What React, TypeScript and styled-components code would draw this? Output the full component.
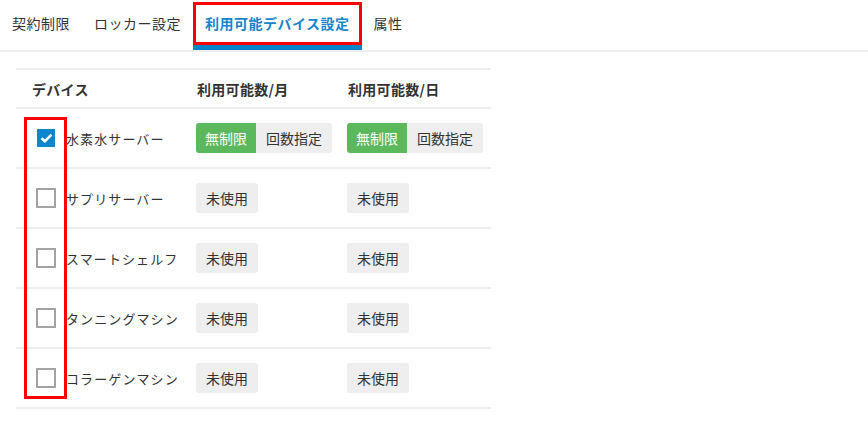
import React from "react";
import styled, { createGlobalStyle } from "styled-components";

const GlobalStyle = createGlobalStyle`
  * { box-sizing: border-box; }
  body {
    margin: 0;
    background: #ffffff;
    font-family: "Noto Sans CJK JP", "Noto Sans", sans-serif;
    color: #333;
  }
`;

const TabBar = styled.ul`
  display: flex;
  margin: 0;
  padding: 0;
  list-style: none;
  height: 52px;
  border-bottom: 2px solid #eeeeee;
`;

const Tab = styled.li<{ $active?: boolean }>`
  position: relative;
  display: flex;
  align-items: center;
  height: 50px;
  padding: 0 12px;
  font-size: 14px;
  letter-spacing: 0.5px;
  color: ${(p) => (p.$active ? "#1685c9" : "#333")};
  font-weight: ${(p) => (p.$active ? 700 : 400)};
  border-bottom: 5px solid ${(p) => (p.$active ? "#0a83c8" : "transparent")};
`;

const Highlight = styled.span`
  position: absolute;
  pointer-events: none;
  border: 3px solid #ff0000;
`;

const TabHighlight = styled(Highlight)`
  left: 0;
  right: 0;
  top: 2px;
  bottom: 0;
`;

const TableWrap = styled.div`
  position: relative;
  width: 475px;
  margin: 16px 0 0 16px;
`;

const Table = styled.table`
  width: 100%;
  border-collapse: collapse;
  border-top: 2px solid #eeeeee;
`;

const HeadCell = styled.th`
  text-align: left;
  font-size: 14px;
  font-weight: 700;
  color: #333;
  height: 39px;
  padding: 0 0 0 16px;
  letter-spacing: 0.3px;
`;

const Row = styled.tr`
  border-top: 2px solid #eeeeee;
  border-bottom: 2px solid #eeeeee;
`;

const Cell = styled.td`
  height: 60px;
  padding: 0 0 0 15px;
  vertical-align: middle;
`;

const DeviceLabel = styled.label`
  display: flex;
  align-items: center;
  gap: 10px;
  padding-left: 5px;
  font-size: 13px;
  letter-spacing: 1.1px;
  color: #333;
  white-space: nowrap;
`;

const Check = styled.span<{ $checked?: boolean }>`
  display: inline-flex;
  align-items: center;
  justify-content: center;
  width: 20px;
  height: 20px;
  flex: none;
  border: ${(p) => (p.$checked ? "1px solid #fff" : "2px solid #a3a3a3")};
  background: ${(p) => (p.$checked ? "#0a86cf" : "#fff")};
`;

const Group = styled.div`
  display: flex;
`;

const Btn = styled.span<{ $variant?: "on" | "off" | "plain" }>`
  display: inline-flex;
  align-items: center;
  height: 30px;
  padding: 0 ${(p) => (p.$variant === "on" ? 9 : 10)}px;
  font-size: 14px;
  color: ${(p) => (p.$variant === "on" ? "#fff" : "#333")};
  background: ${(p) => (p.$variant === "on" ? "#5cb85c" : "#eeeeee")};
  border-radius: ${(p) =>
    p.$variant === "on" ? "3px 0 0 3px" : p.$variant === "off" ? "0 3px 3px 0" : "3px"};
  white-space: nowrap;
`;

const CheckHighlight = styled(Highlight)`
  left: 8px;
  top: 49px;
  width: 43px;
  height: 282px;
`;

const devices = [
  { name: "水素水サーバー", enabled: true },
  { name: "サプリサーバー", enabled: false },
  { name: "スマートシェルフ", enabled: false },
  { name: "タンニングマシン", enabled: false },
  { name: "コラーゲンマシン", enabled: false },
];

function Limit({ enabled }: { enabled: boolean }) {
  if (!enabled) return <Btn $variant="plain">未使用</Btn>;
  return (
    <Group>
      <Btn $variant="on">無制限</Btn>
      <Btn $variant="off">回数指定</Btn>
    </Group>
  );
}

export default function App() {
  return (
    <>
      <GlobalStyle />
      <TabBar>
        <Tab>契約制限</Tab>
        <Tab>ロッカー設定</Tab>
        <Tab $active>
          利用可能デバイス設定
          <TabHighlight />
        </Tab>
        <Tab>属性</Tab>
      </TabBar>
      <TableWrap>
        <Table>
          <colgroup>
            <col style={{ width: 165 }} />
            <col style={{ width: 151 }} />
            <col />
          </colgroup>
          <thead>
            <tr>
              <HeadCell>デバイス</HeadCell>
              <HeadCell>利用可能数/月</HeadCell>
              <HeadCell>利用可能数/日</HeadCell>
            </tr>
          </thead>
          <tbody>
            {devices.map((d) => (
              <Row key={d.name}>
                <Cell>
                  <DeviceLabel>
                    <Check $checked={d.enabled}>
                      {d.enabled && (
                        <svg width="13" height="10" viewBox="0 0 13 10">
                          <path d="M1.5 5.2 L4.8 8.3 L11.5 1.6" fill="none" stroke="#fff" strokeWidth="2.6" />
                        </svg>
                      )}
                    </Check>
                    {d.name}
                  </DeviceLabel>
                </Cell>
                <Cell>
                  <Limit enabled={d.enabled} />
                </Cell>
                <Cell>
                  <Limit enabled={d.enabled} />
                </Cell>
              </Row>
            ))}
          </tbody>
        </Table>
        <CheckHighlight />
      </TableWrap>
    </>
  );
}
